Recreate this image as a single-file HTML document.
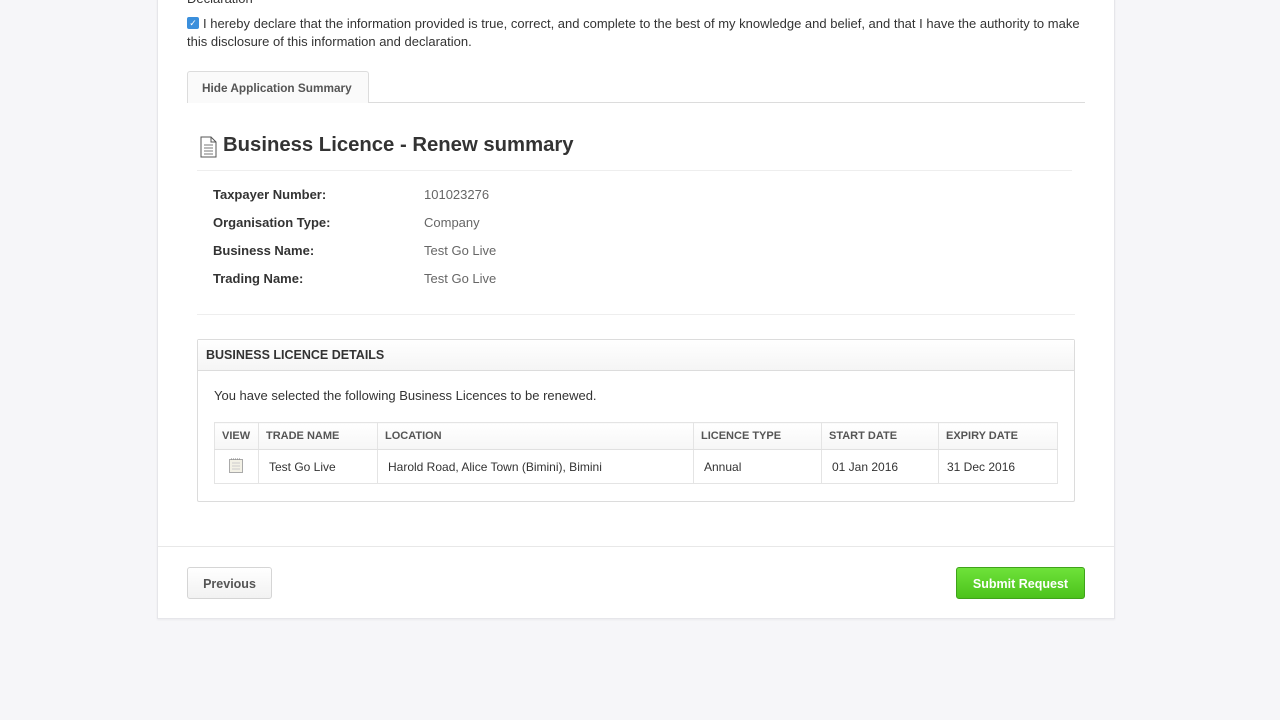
<!DOCTYPE html>
<html><head><meta charset="utf-8"><style>
*{margin:0;padding:0;box-sizing:border-box}
body{width:1280px;height:720px;background:#f6f6f9;font-family:"Liberation Sans",Arial,sans-serif;color:#333;position:relative;overflow:hidden}
.panel{position:absolute;left:157px;top:-5px;width:958px;height:624px;background:#fff;border:1px solid #e6e6ea;box-shadow:0 1px 2px rgba(0,0,0,.05)}
.a{position:absolute;white-space:nowrap}
.lbl{font-size:13px;font-weight:bold;color:#333}
.val{font-size:13px;color:#666}
th,td{font-size:11px;text-align:left;padding:0 7px;border-right:1px solid #e4e4e4}
table{border-collapse:collapse;border:1px solid #e4e4e4}
th{height:27px;color:#555;background:linear-gradient(#fff,#f6f6f6);border-bottom:1px solid #e0e0e0}
td{height:34px;font-size:12px;color:#333}
</style></head><body>
<div class="panel"></div>
<div class="a" style="left:187px;top:-9px;font-size:13px;color:#333">Declaration</div>
<div class="a" style="left:187px;top:17px;width:12px;height:12px;background:#3b8fdc;border-radius:2px;color:#fff;font-size:9px;text-align:center;line-height:12px">✓</div>
<div class="a" style="left:187px;top:15px;font-size:13px;line-height:18px;color:#333;white-space:normal;width:900px;text-indent:16px">I hereby declare that the information provided is true, correct, and complete to the best of my knowledge and belief, and that I have the authority to make this disclosure of this information and declaration.</div>
<div class="a" style="left:187px;top:102px;width:898px;border-top:1px solid #dcdcdc"></div>
<div class="a" style="left:187px;top:71px;width:182px;height:32px;border:1px solid #dcdcdc;border-bottom:none;background:#fafafa;border-radius:3px 3px 0 0;font-size:11.8px;font-weight:bold;color:#555;padding:9px 0 0 14px">Hide Application Summary</div>
<svg class="a" style="left:200px;top:136px" width="17" height="22" viewBox="0 0 17 22"><path d="M1 1h10l5 5v15H1z" fill="#fff" stroke="#555"/><path d="M11 1v5h5" fill="none" stroke="#555"/><path d="M4 9h9M4 12h9M4 15h9M4 18h9" stroke="#777"/></svg>
<div class="a" style="left:223px;top:134px;font-size:20.3px;font-weight:bold;color:#333">Business Licence - Renew summary</div>
<div class="a" style="left:197px;top:170px;width:875px;border-top:1px solid #eee"></div>
<div class="a lbl" style="left:213px;top:187px">Taxpayer Number:</div><div class="a val" style="left:424px;top:187px">101023276</div>
<div class="a lbl" style="left:213px;top:215px">Organisation Type:</div><div class="a val" style="left:424px;top:215px">Company</div>
<div class="a lbl" style="left:213px;top:243px">Business Name:</div><div class="a val" style="left:424px;top:243px">Test Go Live</div>
<div class="a lbl" style="left:213px;top:271px">Trading Name:</div><div class="a val" style="left:424px;top:271px">Test Go Live</div>
<div class="a" style="left:197px;top:314px;width:878px;border-top:1px solid #eee"></div>
<div class="a" style="left:197px;top:339px;width:878px;height:163px;border:1px solid #dcdcdc;border-radius:2px"></div>
<div class="a" style="left:198px;top:340px;width:876px;height:31px;background:linear-gradient(#fff,#f5f5f5);border-bottom:1px solid #dcdcdc;font-size:12.5px;font-weight:bold;color:#333;padding:8px 0 0 8px">BUSINESS LICENCE DETAILS</div>
<div class="a" style="left:214px;top:388px;font-size:13px;color:#333">You have selected the following Business Licences to be renewed.</div>
<table class="a" style="left:214px;top:422px;width:844px">
<tr><th style="width:44px">VIEW</th><th style="width:119px">TRADE NAME</th><th style="width:316px">LOCATION</th><th style="width:128px">LICENCE TYPE</th><th style="width:117px">START DATE</th><th>EXPIRY DATE</th></tr>
<tr><td style="padding-left:14px"><svg width="14" height="15"><rect x=".5" y="1.5" width="13" height="13" fill="#f3f1e6" stroke="#aaa"/><path d="M3 5h8M3 8h8M3 11h8" stroke="#ccc"/><path d="M2 1h10" stroke="#888" stroke-dasharray="1 1"/></svg></td><td style="padding-left:10px">Test Go Live</td><td style="padding-left:10px">Harold Road, Alice Town (Bimini), Bimini</td><td style="padding-left:10px">Annual</td><td style="padding-left:10px">01 Jan 2016</td><td style="padding-left:8px">31 Dec 2016</td></tr>
</table>
<div class="a" style="left:158px;top:546px;width:956px;border-top:1px solid #e8e8e8"></div>
<div class="a" style="left:187px;top:567px;width:85px;height:32px;border:1px solid #d5d5d5;border-radius:3px;background:linear-gradient(#fff,#f2f2f2);font-size:12.5px;font-weight:bold;color:#555;text-align:center;line-height:32px">Previous</div>
<div class="a" style="left:956px;top:567px;width:129px;height:32px;border:1px solid #3fa31a;border-radius:3px;background:linear-gradient(#6ee23a,#4cc21c);font-size:12.5px;font-weight:bold;color:#fff;text-align:center;line-height:32px">Submit Request</div>
</body></html>
